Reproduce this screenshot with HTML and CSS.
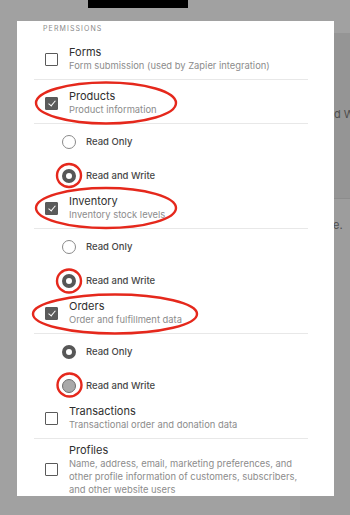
FILE: index.html
```html
<!DOCTYPE html>
<html lang="en">
<head>
    <meta charset="UTF-8">
    <meta name="viewport" content="width=device-width, initial-scale=1.0">
    <title>Permissions</title>
    <link rel="stylesheet" href="styles.css">
</head>
<body>
    <div class="page">
        <div class="redacted"></div>
        <div class="page-panel">
            <div class="panel-text">d W</div>
        </div>
        <div class="page-rest">
            <div class="rest-text">e.</div>
        </div>
    </div>

    <div class="modal">
        <div class="section-label">Permissions</div>
        <div class="perm-list">
            <div class="perm-row">
                <span class="checkbox"></span>
                <div class="perm-text">
                    <div class="perm-title">Forms</div>
                    <div class="perm-desc">Form submission (used by Zapier integration)</div>
                </div>
            </div>

            <div class="perm-row">
                <span class="checkbox checked"></span>
                <div class="perm-text">
                    <div class="perm-title">Products</div>
                    <div class="perm-desc">Product information</div>
                </div>
            </div>
            <div class="radio-group">
                <div class="radio-row"><span class="radio"></span>Read Only</div>
                <div class="radio-row"><span class="radio on"></span>Read and Write</div>
            </div>

            <div class="perm-row">
                <span class="checkbox checked"></span>
                <div class="perm-text">
                    <div class="perm-title">Inventory</div>
                    <div class="perm-desc">Inventory stock levels</div>
                </div>
            </div>
            <div class="radio-group">
                <div class="radio-row"><span class="radio"></span>Read Only</div>
                <div class="radio-row"><span class="radio on"></span>Read and Write</div>
            </div>

            <div class="perm-row">
                <span class="checkbox checked"></span>
                <div class="perm-text">
                    <div class="perm-title">Orders</div>
                    <div class="perm-desc">Order and fulfillment data</div>
                </div>
            </div>
            <div class="radio-group">
                <div class="radio-row"><span class="radio on"></span>Read Only</div>
                <div class="radio-row"><span class="radio disabled"></span>Read and Write</div>
            </div>

            <div class="perm-row">
                <span class="checkbox"></span>
                <div class="perm-text">
                    <div class="perm-title">Transactions</div>
                    <div class="perm-desc">Transactional order and donation data</div>
                </div>
            </div>

            <div class="perm-row profiles">
                <span class="checkbox"></span>
                <div class="perm-text">
                    <div class="perm-title">Profiles</div>
                    <div class="perm-desc multi">Name, address, email, marketing preferences, and other profile information of customers, subscribers, and other website users</div>
                </div>
            </div>
        </div>
    </div>

    <!-- hand-drawn annotation marks -->
    <svg class="marks" width="350" height="515" viewBox="0 0 350 515">
        <g fill="none" stroke="#e5281c" stroke-width="2.4">
            <ellipse cx="106" cy="103" rx="70" ry="20.5"/>
            <ellipse cx="106" cy="208" rx="70" ry="20"/>
            <ellipse cx="115" cy="314" rx="82" ry="19.5"/>
            <ellipse cx="69" cy="175.5" rx="12" ry="11.5"/>
            <ellipse cx="69" cy="281" rx="12" ry="11.5"/>
            <ellipse cx="69.5" cy="385" rx="12" ry="11.5"/>
        </g>
    </svg>
</body>
</html>
```

FILE: styles.css
```css
* {
    margin: 0;
    padding: 0;
    box-sizing: border-box;
}

body {
    width: 350px;
    height: 515px;
    overflow: hidden;
    position: relative;
    background: #a1a1a1;
    font-family: 'Inter', 'Liberation Sans', sans-serif;
    color: #333;
}

/* page behind the dimmed overlay */
.page {
    height: 100%;
}

.redacted {
    margin-left: 88px;
    width: 100px;
    height: 8px;
    background: #000;
}

.page-panel {
    margin-top: 25px;
    margin-left: 300px;
    height: 166px;
    background: #959595;
    border-bottom: 1px solid #8c8c8c;
    padding-top: 74px;
}

.panel-text {
    padding-left: 34px;
    font-size: 11px;
    color: #4d4d4d;
    white-space: nowrap;
}

.page-rest {
    margin-left: 300px;
    padding-top: 19px;
    background: #9d9d9d;
    height: 316px;
}

.rest-text {
    padding-left: 33px;
    font-size: 11px;
    color: #4d4d4d;
}

/* modal */
.modal {
    position: absolute;
    left: 17px;
    top: 21px;
    width: 317px;
    height: 475px;
    background: #fff;
    overflow: hidden;
}

.section-label {
    margin-top: 3px;
    padding-left: 26px;
    font-size: 7px;
    line-height: 10px;
    letter-spacing: 1.1px;
    text-transform: uppercase;
    color: #8a8a8a;
}

.perm-list {
    margin: 2px 0 0 17px;
    width: 274px;
}

.perm-row {
    display: flex;
    align-items: center;
    gap: 11px;
    padding: 9px 0 6px 11px;
    border-bottom: 1px solid #e8e8e8;
}

.perm-row.profiles {
    padding-top: 4px;
    border-bottom: none;
}

.perm-title {
    font-size: 11px;
    line-height: 14px;
    color: #2f2f2f;
}

.perm-desc {
    font-size: 9.4px;
    line-height: 14px;
    color: #8c8c8c;
}

.perm-desc.multi {
    line-height: 13px;
}

.checkbox {
    flex: none;
    width: 13px;
    height: 13px;
    border: 1px solid #5a5a5a;
    border-radius: 1px;
    background: #fff;
    position: relative;
}

.checkbox.checked {
    background: #5b5b5b;
}

.checkbox.checked::after {
    content: '';
    position: absolute;
    left: 3.5px;
    top: 1.5px;
    width: 3px;
    height: 6px;
    border: solid #fff;
    border-width: 0 1.6px 1.6px 0;
    transform: rotate(40deg);
}

.radio-group {
    display: flex;
    flex-direction: column;
    gap: 17px;
    padding: 9px 0 1px 28px;
}

.radio-row {
    display: flex;
    align-items: center;
    gap: 10px;
    height: 17px;
    font-size: 9.5px;
    font-weight: 500;
    color: #474747;
}

.radio {
    flex: none;
    width: 14px;
    height: 14px;
    border-radius: 50%;
    border: 1px solid #8a8a8a;
    background: #fff;
}

.radio.on {
    border: 4px solid #575757;
}

.radio.disabled {
    border: 1.5px solid #6e6e6e;
    background: #a9a9a9;
}

.marks {
    position: absolute;
    left: 0;
    top: 0;
}
```
